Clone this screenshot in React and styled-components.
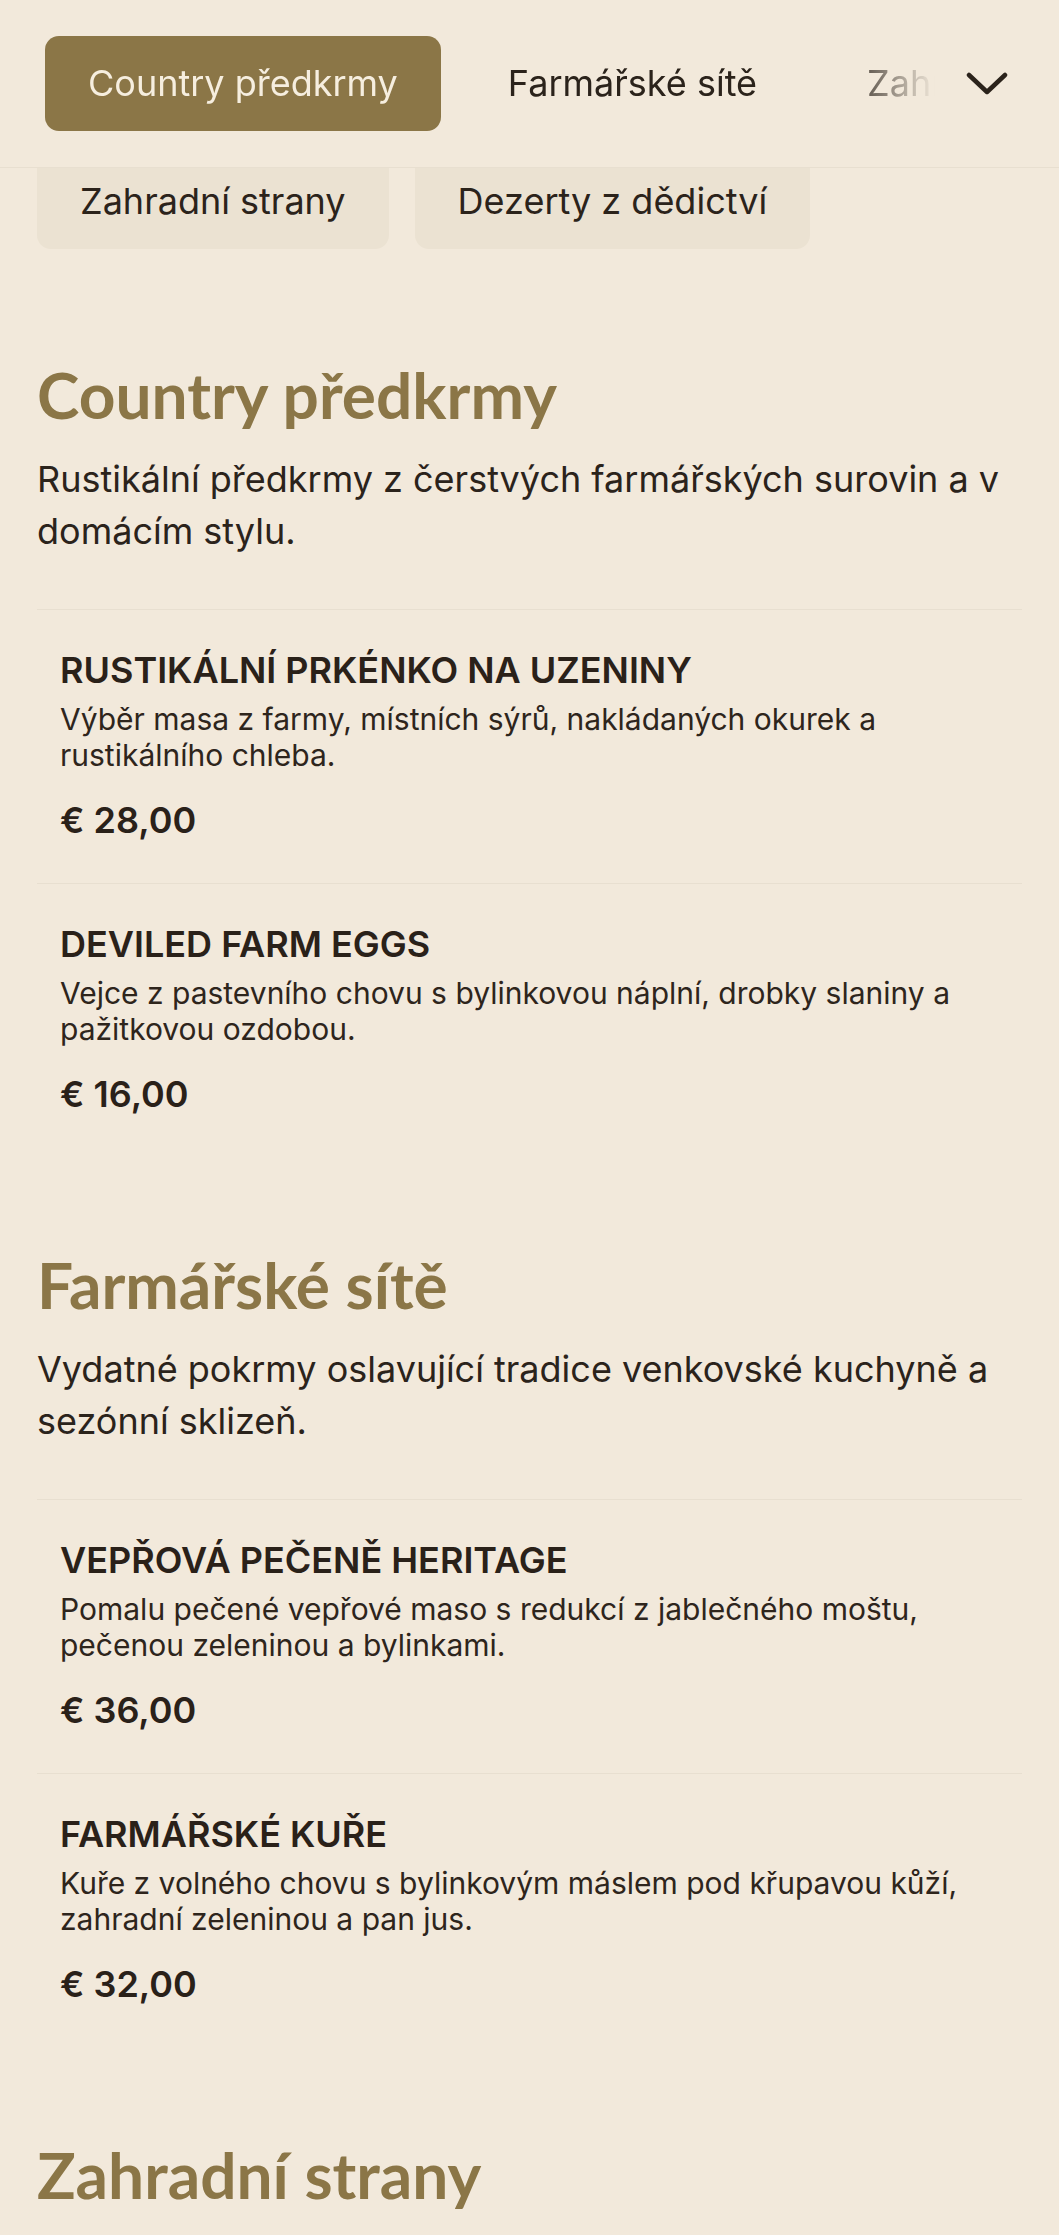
import React from "react";
import styled, { createGlobalStyle } from "styled-components";

const sections = [
  {
    id: "country",
    title: "Country předkrmy",
    intro: "Rustikální předkrmy z čerstvých farmářských surovin a v domácím stylu.",
    items: [
      {
        name: "RUSTIKÁLNÍ PRKÉNKO NA UZENINY",
        desc: "Výběr masa z farmy, místních sýrů, nakládaných okurek a rustikálního chleba.",
        price: "€ 28,00",
      },
      {
        name: "DEVILED FARM EGGS",
        desc: "Vejce z pastevního chovu s bylinkovou náplní, drobky slaniny a pažitkovou ozdobou.",
        price: "€ 16,00",
      },
    ],
  },
  {
    id: "farm",
    title: "Farmářské sítě",
    intro: "Vydatné pokrmy oslavující tradice venkovské kuchyně a sezónní sklizeň.",
    items: [
      {
        name: "VEPŘOVÁ PEČENĚ HERITAGE",
        desc: "Pomalu pečené vepřové maso s redukcí z jablečného moštu, pečenou zeleninou a bylinkami.",
        price: "€ 36,00",
      },
      {
        name: "FARMÁŘSKÉ KUŘE",
        desc: "Kuře z volného chovu s bylinkovým máslem pod křupavou kůží, zahradní zeleninou a pan jus.",
        price: "€ 32,00",
      },
    ],
  },
  {
    id: "garden",
    title: "Zahradní strany",
    intro: "Sezónní přílohy z naší zahrady, připravené jednoduše a s láskou.",
    items: [
      {
        name: "PEČENÁ KOŘENOVÁ ZELENINA",
        desc: "Mrkev, pastinák a řepa s medem a tymiánem.",
        price: "€ 9,00",
      },
    ],
  },
  {
    id: "dessert",
    title: "Dezerty z dědictví",
    intro: "Sladké tečky podle receptů našich babiček.",
    items: [
      {
        name: "JABLEČNÝ KOLÁČ",
        desc: "Domácí koláč s karamelem a vanilkovou zmrzlinou.",
        price: "€ 11,00",
      },
    ],
  },
];

const GlobalStyle = createGlobalStyle`
  * { box-sizing: border-box; }
  body {
    margin: 0;
    background: #f2e9db;
    color: #2b231b;
    font-family: Inter, "Noto Sans", sans-serif;
  }
`;

const Header = styled.header`
  position: sticky;
  top: 0;
  z-index: 2;
  display: flex;
  align-items: center;
  padding: 36px 32px 36px 45px;
  background: #f2e9db;
  border-bottom: 1px solid #e8dfd0;
`;

const TabStrip = styled.nav`
  flex: 1;
  display: flex;
  gap: 24px;
  overflow: hidden;
  -webkit-mask-image: linear-gradient(to right, #000 calc(100% - 95px), transparent);
  mask-image: linear-gradient(to right, #000 calc(100% - 95px), transparent);
`;

const Tab = styled.button`
  flex-shrink: 0;
  border: none;
  border-radius: 14px;
  padding: 27px 43px;
  font-family: Inter, "Noto Sans", sans-serif;
  font-size: 36px;
  line-height: 41px;
  font-weight: 400;
  white-space: nowrap;
  cursor: pointer;
  background: ${(p) => (p.$active ? "#8b7647" : p.$soft ? "#ebe2d2" : "transparent")};
  color: ${(p) => (p.$active ? "#f6eedf" : "#2b231b")};
`;

const Toggle = styled.button`
  flex-shrink: 0;
  width: 80px;
  margin-left: 12px;
  display: flex;
  align-items: center;
  justify-content: center;
  background: none;
  border: none;
  padding: 0;
  cursor: pointer;
`;

const MoreTabs = styled.div`
  display: flex;
  gap: 26px;
  padding: 0 37px;
  margin-top: -14px;
`;

const Menu = styled.main`
  display: flex;
  flex-direction: column;
  gap: 89px;
  padding: 107px 37px 80px;
`;

const Section = styled.section`
  display: flex;
  flex-direction: column;
`;

const SectionTitle = styled.h2`
  margin: 0;
  font-family: Lato, "Open Sans", sans-serif;
  font-weight: 700;
  font-size: 64px;
  line-height: 77px;
  color: #8b7647;
`;

const Intro = styled.p`
  margin: 20px 0 52px;
  font-size: 36px;
  line-height: 52px;
  color: #2b231b;
`;

const Item = styled.article`
  padding: 40px 23px 43px;
  border-top: 1px solid #e8dfd0;
`;

const ItemName = styled.h3`
  margin: 0;
  font-size: 36px;
  line-height: 40px;
  font-weight: 600;
  color: #2a2119;
`;

const ItemDesc = styled.p`
  margin: 11px 0 0;
  font-size: 30px;
  line-height: 36px;
  color: #2e251c;
`;

const Price = styled.div`
  margin-top: 27px;
  font-size: 36px;
  line-height: 40px;
  font-weight: 600;
  color: #2a2119;
`;

function Chevron() {
  return (
    <svg width="42" height="23" viewBox="0 0 42 23" fill="none">
      <polyline
        points="3,3 21,20 39,3"
        stroke="#2b231b"
        strokeWidth="4.5"
        strokeLinecap="round"
        strokeLinejoin="round"
      />
    </svg>
  );
}

export default function App() {
  return (
    <>
      <GlobalStyle />
      <Header>
        <TabStrip>
          {sections.map((s, i) => (
            <Tab key={s.id} $active={i === 0}>
              {s.title}
            </Tab>
          ))}
        </TabStrip>
        <Toggle aria-label="Zobrazit kategorie">
          <Chevron />
        </Toggle>
      </Header>
      <MoreTabs>
        {sections.slice(2).map((s) => (
          <Tab key={s.id} $soft>
            {s.title}
          </Tab>
        ))}
      </MoreTabs>
      <Menu>
        {sections.map((s) => (
          <Section key={s.id}>
            <SectionTitle>{s.title}</SectionTitle>
            <Intro>{s.intro}</Intro>
            {s.items.map((it) => (
              <Item key={it.name}>
                <ItemName>{it.name}</ItemName>
                <ItemDesc>{it.desc}</ItemDesc>
                <Price>{it.price}</Price>
              </Item>
            ))}
          </Section>
        ))}
      </Menu>
    </>
  );
}
